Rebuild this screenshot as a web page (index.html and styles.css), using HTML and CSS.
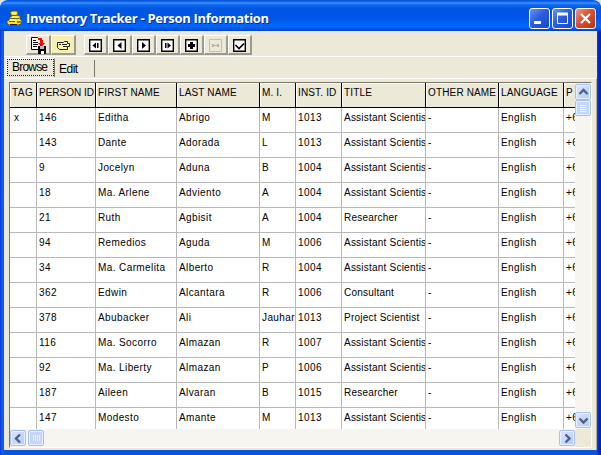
FILE: index.html
```
<!DOCTYPE html>
<html lang="en">
<head>
<meta charset="utf-8">
<title>Inventory Tracker - Person Information</title>
<link rel="stylesheet" href="styles.css">
</head>
<body>
<div class="window">
  <header class="titlebar">
    <svg class="app-icon" width="17" height="16" viewBox="0 0 17 16"><path d="M4 2.500 6 1h5l1 2-1 2 3 1v3l2 2-1 3-3 1H3l-2-2v-2l2-1 1-3 2-1z" fill="#f6e03a" stroke="#5a5008" stroke-width=".8"/><path d="M6 5.500h5M4 8.500h9M3 11.500h6" stroke="#6a5f10" fill="none"/><path d="M6 3h4M6 7h5M4 10h6" stroke="#fffcb0"/><path d="M4 14.500h7M11 12h4" stroke="#222"/></svg>
    <h1>Inventory Tracker - Person Information</h1>
    <div class="controls">
      <button class="ctl"><svg width="19" height="19" viewBox="0 0 19 19"><path d="M4 12h7v3H4z" fill="#fff"/></svg></button>
      <button class="ctl"><svg width="19" height="19" viewBox="0 0 19 19"><path d="M4.500 4v10.500h10V4" fill="none" stroke="#fff"/><path d="M4 5h11" stroke="#fff" stroke-width="3"/></svg></button>
      <button class="ctl close"><svg width="19" height="19" viewBox="0 0 19 19"><path d="m5 5 9 9m0-9-9 9" stroke="#fff" stroke-width="2.200"/></svg></button>
    </div>
  </header>
  <div class="client">
    <div class="toolbar">
      <button class="tool wide"><svg width="18" height="17" viewBox="0 0 18 17"><path d="M2.500 .5h6l3 3v9h-9z" fill="#fff" stroke="#000"/><path d="M4 3.500h3M4 5.500h5M4 7.500h5M4 9.500h4" stroke="#000"/><path d="M9 1h4v2h1v3h2l-3.500 4L9 6h2V3H9z" fill="#f00"/><path d="M9 9h8v8H9z" fill="#000"/><path d="M11 9h4v3h-4z" fill="#b8b8b8"/><path d="M12 14h3v3h-3z" fill="#fff"/></svg></button>
      <button class="tool wide yellow"><svg width="15" height="13" viewBox="0 0 15 13"><path d="M1.500 3.500h6l1-1h3v2h2v3h-2v3h-8l-2-2z" fill="#fff49a" stroke="#222"/><path d="M6 5.500h5M7 7.500h4M3 5.500h2" stroke="#222"/></svg></button>
      <span class="gap"></span>
      <button class="tool"><svg width="13" height="13" viewBox="0 0 13 13"><path class="box" d="M.7.700h11.600v11.600H.7z"/><path d="M7 3.500v6L3.500 6.500zM8 4h1.500v5H8z"/></svg></button>
      <button class="tool"><svg width="13" height="13" viewBox="0 0 13 13"><path class="box" d="M.7.700h11.600v11.600H.7z"/><path d="M8.500 3v7L4.500 6.500z"/></svg></button>
      <button class="tool"><svg width="13" height="13" viewBox="0 0 13 13"><path class="box" d="M.7.700h11.600v11.600H.7z"/><path d="M5 3v7l4-3.500z"/></svg></button>
      <button class="tool"><svg width="13" height="13" viewBox="0 0 13 13"><path class="box" d="M.7.700h11.600v11.600H.7z"/><path d="M6.500 3.500v6L10 6.500zM4 4h1.500v5H4z"/></svg></button>
      <button class="tool"><svg width="13" height="13" viewBox="0 0 13 13"><path class="box" d="M.7.700h11.600v11.600H.7z"/><path d="M5 3h3v2h2v3H8v2H5V8H3V5h2z"/></svg></button>
      <button class="tool disabled"><svg width="13" height="13" viewBox="0 0 13 13"><path class="box" d="M.5 .5h12v12H.5z"/><path d="M3 5h2v1h3V5h2v3H8V7H5v1H3z"/></svg></button>
      <button class="tool"><svg width="13" height="13" viewBox="0 0 13 13"><path class="box" d="M.7.700h11.600v11.600H.7z"/><path class="check" d="m2.500 6 3.500 3.500 5-5"/></svg></button>
    </div>
    <nav class="tabs"><span class="tab active">Browse</span><span class="tab">Edit</span></nav>
    <main class="page">
      <div class="grid">
        <div class="rows" id="rows"></div>
        <div class="vscroll">
          <span class="sb"><svg width="15" height="15" viewBox="0 0 15 15"><path d="m3.500 9 4-4 4 4"/></svg></span>
          <span class="sb thumb"><svg width="15" height="15" viewBox="0 0 15 15"><path d="M4 4.500h6M4 6.500h6M4 8.500h6M4 10.500h6"/></svg></span>
          <span class="space"></span>
          <span class="sb"><svg width="15" height="15" viewBox="0 0 15 15"><path d="m3.500 5.500 4 4 4-4"/></svg></span>
        </div>
        <div class="hscroll">
          <span class="sb"><svg width="15" height="15" viewBox="0 0 15 15"><path d="m9 3.500-4 4 4 4"/></svg></span>
          <span class="sb thumb"><svg width="15" height="15" viewBox="0 0 15 15"><path d="M4.500 4v6M6.500 4v6M8.500 4v6M10.500 4v6"/></svg></span>
          <span class="space"></span>
          <span class="sb"><svg width="15" height="15" viewBox="0 0 15 15"><path d="m5.500 3.500 4 4-4 4"/></svg></span>
        </div>
        <div class="corner"></div>
      </div>
    </main>
  </div>
</div>
<script src="grid.js"></script>
</body>
</html>
```
FILE: grid.js
```
const head = ["TAG", "PERSON ID", "FIRST NAME", "LAST NAME", "M. I.", "INST. ID", "TITLE", "OTHER NAME", "LANGUAGE", "P"];
const AS = "Assistant Scientis";
const people = [
  ["x", "146", "Editha", "Abrigo", "M", "1013", AS],
  ["", "143", "Dante", "Adorada", "L", "1013", AS],
  ["", "9", "Jocelyn", "Aduna", "B", "1004", AS],
  ["", "18", "Ma. Arlene", "Adviento", "A", "1004", AS],
  ["", "21", "Ruth", "Agbisit", "A", "1004", "Researcher"],
  ["", "94", "Remedios", "Aguda", "M", "1006", AS],
  ["", "34", "Ma. Carmelita", "Alberto", "R", "1004", AS],
  ["", "362", "Edwin", "Alcantara", "R", "1006", "Consultant"],
  ["", "378", "Abubacker", "Ali", "Jauhar", "1013", "Project Scientist"],
  ["", "116", "Ma. Socorro", "Almazan", "R", "1007", AS],
  ["", "92", "Ma. Liberty", "Almazan", "P", "1006", AS],
  ["", "187", "Aileen", "Alvaran", "B", "1015", "Researcher"],
  ["", "147", "Modesto", "Amante", "M", "1013", AS]
];
const rows = document.getElementById("rows");
function addRow(cells, cls) {
  const row = document.createElement("div");
  row.className = cls;
  for (const text of cells) {
    const cell = document.createElement("span");
    cell.textContent = text;
    row.append(cell);
  }
  rows.append(row);
}
addRow(head, "row head");
people.forEach(p => addRow([...p, "-", "English", "+6"], "row"));
```
FILE: styles.css
```
* { box-sizing: border-box; }
body { margin: 0; width: 601px; height: 455px; overflow: hidden; background: #d8e4f4; font-family: "Liberation Sans", Arial, sans-serif; color: #000; }
h1 { margin: 0; }
button { border: 0; padding: 0; font: inherit; }
svg { display: block; flex: none; }
.window { width: 601px; height: 455px; padding: 1px 4px 5px; display: flex; flex-direction: column; border-radius: 8px 8px 0 0; background: linear-gradient(90deg, #0831d9 0, #1660ee 2px, #0855dd 4px, #0855dd 597px, #0030c8 598px, #001ea0 601px); }
.titlebar { height: 30px; flex: none; margin: 0 -4px; padding: 0 5px 0 6px; display: flex; align-items: center; border-radius: 8px 8px 0 0; background: linear-gradient(#0958d8 0, #3a92ff 2px, #0868ee 4px, #0055e0 8px, #0056e6 17px, #0066ff 25px, #0060f4 27px, #0040c0 30px); }
.titlebar h1 { margin-left: 3px; margin-top: 3px; flex: 1; font: bold 13px/18px "Open Sans", "Noto Sans", sans-serif; letter-spacing: -.3px; color: #fff; text-shadow: 1px 1px 0 #0b2f91; white-space: nowrap; }
.app-icon { margin-top: 3px; }
.controls { display: flex; gap: 2px; margin-top: 4px; }
.ctl { width: 21px; height: 21px; border: 1px solid #fff; border-radius: 3px; background: linear-gradient(135deg, #6d94f4, #2b5de0 45%, #1747cf); }
.ctl.close { background: linear-gradient(135deg, #f09a80, #dc5030 45%, #bd3210); }
.client { flex: 1; min-height: 0; background: #ece9d8; display: flex; flex-direction: column; }
.toolbar { height: 26px; flex: none; padding: 4px 0 0 22px; display: flex; border-bottom: 1px solid #fff; }
.tool { width: 24px; height: 20px; flex: none; display: flex; align-items: center; justify-content: center; padding-top: 1px; background: #ece9d8; border: solid; border-width: 1px 2px 2px 1px; border-color: #fff #9d9a8c #9d9a8c #fff; }
.tool.wide { width: 25px; }
.tool.yellow { background: #f3efb8; }
.gap { width: 8px; }
.box { fill: #fff; stroke: #000; stroke-width: 1.4; }
.check { fill: none; stroke: #000; stroke-width: 1.6; }
.disabled .box { fill: none; stroke: #c4c0b0; stroke-width: 1; }
.disabled path { fill: #b8b4a4; }
.tabs { height: 20px; flex: none; display: flex; align-items: flex-end; padding-left: 2px; font-size: 12px; line-height: 14px; }
.tab { height: 17px; width: 40px; padding: 2px 0 0 4px; border-right: 1px solid #77756a; letter-spacing: -.5px; }
.tab.active { height: 19px; width: 49px; padding: 1px 0 0 5px; outline: 1px dotted #222; outline-offset: -2px; border-left: 1px solid #fff; border-top: 1px solid #fff; letter-spacing: -.8px; }
.page { flex: 1; min-height: 0; border-top: 1px solid #fff; padding: 3px 4px 1px 5px; margin-top: 1px; border-right: 1px solid #aca899; }
.grid { width: 583px; height: 366px; display: grid; grid-template: 346px 18px / 565px 16px; border: 1px solid #77756a; border-color: #77756a #fff #fff #77756a; background: #fff; }
.rows { overflow: hidden; }
.row { display: grid; grid-template-columns: 27px 59px 81px 83px 36px 46px 84px 73px 65px 30px; height: 25px; }
.row span { overflow: hidden; white-space: nowrap; padding: 4px 0 0 2px; border-right: 1px solid #b8b8b8; border-bottom: 1px solid #b8b8b8; font-size: 10px; line-height: 11px; letter-spacing: .4px; }
.row span:first-child { padding-left: 4px; }
.row span:nth-child(7) { letter-spacing: .22px; }
.row.head span { background: #ece9d8; border-color: #000; padding-top: 4px; box-shadow: inset 1px 1px #fff; letter-spacing: .15px; }
.row.head span:first-child { padding-left: 2px; letter-spacing: .5px; }
.row.head span:nth-child(2) { letter-spacing: 0; }
.vscroll, .hscroll { display: flex; background: #f6f5f0; }
.vscroll { flex-direction: column; padding: 1px 0; }
.hscroll { padding: 1px 0; }
.space { flex: 1; }
.sb { width: 16px; height: 16px; flex: none; display: flex; align-items: center; justify-content: center; border: 1px solid #a9bfec; border-radius: 2px; background: linear-gradient(135deg, #dbe6ff, #b5caf7); box-shadow: inset 0 0 0 1px #e8f0ff; }
.sb path { fill: none; stroke: #4d6185; stroke-width: 2.4; }
.sb.thumb { background: #c4d6fd; }
.sb.thumb path { stroke: #edf3ff; stroke-width: 1; }
.hscroll .thumb { margin-left: 2px; }
.corner { background: #ece9d8; }
```
